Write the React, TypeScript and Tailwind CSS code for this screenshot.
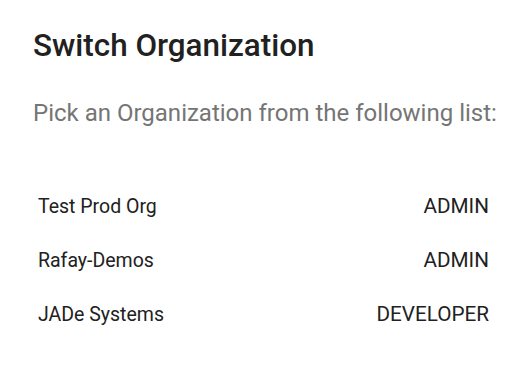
const orgs = [
  { name: 'Test Prod Org', role: 'ADMIN' },
  { name: 'Rafay-Demos', role: 'ADMIN' },
  { name: 'JADe Systems', role: 'DEVELOPER' },
];

export default function App() {
  return (
    <div className="w-[526px] h-[376px] bg-white font-['Roboto',sans-serif] pl-[33px] pr-[37px] pt-[28px]">
      <h2 className="text-[31.4px] leading-[36px] font-medium text-[#212121]">Switch Organization</h2>
      <p className="mt-[34px] text-[24px] leading-[30px] text-[#757575] whitespace-nowrap">
        Pick an Organization from the following list:
      </p>
      <ul className="mt-[52px] pl-[5px]">
        {orgs.map((o) => (
          <li key={o.name} className="h-[54px] flex items-center justify-between text-[#212121]">
            <span className="text-[19.5px]">{o.name}</span>
            <span className="text-[20.7px]">{o.role}</span>
          </li>
        ))}
      </ul>
    </div>
  );
}
